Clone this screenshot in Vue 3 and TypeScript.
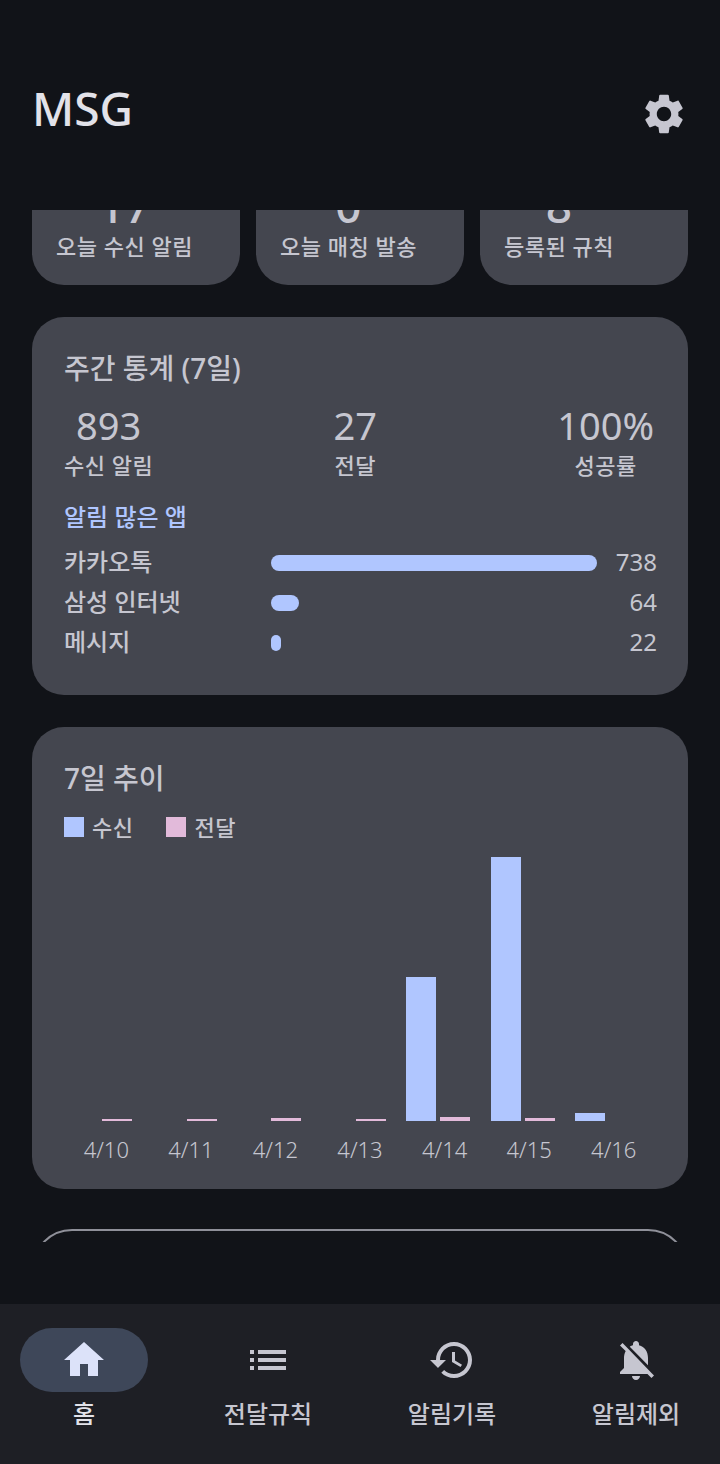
<script setup lang="ts">
import { ref, onMounted } from 'vue'

const scroller = ref<HTMLElement | null>(null)

const todayStats = [
  { value: '17', label: '오늘 수신 알림' },
  { value: '0', label: '오늘 매칭 발송' },
  { value: '8', label: '등록된 규칙' },
]

const weekStats = [
  { value: '893', label: '수신 알림' },
  { value: '27', label: '전달' },
  { value: '100%', label: '성공률' },
]

const topApps = [
  { name: '카카오톡', count: 738, width: 100 },
  { name: '삼성 인터넷', count: 64, width: 8.7 },
  { name: '메시지', count: 22, width: 3 },
]

// heights in px, measured against the tallest bar
const days = [
  { label: '4/10', received: 0, sent: 2 },
  { label: '4/11', received: 0, sent: 2 },
  { label: '4/12', received: 0, sent: 3 },
  { label: '4/13', received: 0, sent: 2 },
  { label: '4/14', received: 144, sent: 4 },
  { label: '4/15', received: 264, sent: 3 },
  { label: '4/16', received: 8, sent: 0 },
]

const tabs = [
  { label: '홈', icon: 'M10 20v-6h4v6h5v-8h3L12 3 2 12h3v8z', active: true },
  { label: '전달규칙', icon: 'M3 13h2v-2H3v2zm0 4h2v-2H3v2zm0-8h2V7H3v2zm4 4h14v-2H7v2zm0 4h14v-2H7v2zM7 7v2h14V7H7z', active: false },
  { label: '알림기록', icon: 'M13 3c-4.97 0-9 4.03-9 9H1l3.89 3.89.07.14L9 12H6c0-3.87 3.13-7 7-7s7 3.13 7 7-3.13 7-7 7c-1.93 0-3.68-.79-4.94-2.06l-1.42 1.42C8.27 19.99 10.51 21 13 21c4.97 0 9-4.03 9-9s-4.03-9-9-9zm-1 5v5l4.28 2.54.72-1.21-3.5-2.08V8H12z', active: false },
  { label: '알림제외', icon: 'M20 18.69L7.84 6.14 5.27 3.49 4 4.76l2.8 2.8v.01c-.52.99-.8 2.16-.8 3.42v5l-2 2v1h13.73l2 2L21 19.72l-1-1.03zM12 22c1.11 0 2-.89 2-2h-4c0 1.11.89 2 2 2zm6-7.32V11c0-3.08-1.64-5.64-4.5-6.32V4c0-.83-.67-1.5-1.5-1.5s-1.5.67-1.5 1.5v.68c-.15.03-.29.08-.42.12-.1.03-.2.07-.3.11h-.01c-.2.08-.4.17-.59.27-.1.05-.2.1-.3.15L18 14.68z', active: false },
]

// the list is shown scrolled down a little
onMounted(() => {
  if (scroller.value) scroller.value.scrollTop = 60
})
</script>

<template>
  <div class="screen">
    <header class="top-bar">
      <span class="title">MSG</span>
      <svg class="gear" viewBox="0 0 24 24" width="48" height="48">
        <path d="M19.14 12.94c.04-.3.06-.61.06-.94 0-.32-.02-.64-.07-.94l2.03-1.58c.18-.14.23-.41.12-.61l-1.92-3.32c-.12-.22-.37-.29-.59-.22l-2.39.96c-.5-.38-1.03-.7-1.62-.94l-.36-2.54c-.04-.24-.24-.41-.48-.41h-3.84c-.24 0-.43.17-.47.41l-.36 2.54c-.59.24-1.13.57-1.62.94l-2.39-.96c-.22-.08-.47 0-.59.22L2.74 8.87c-.12.21-.08.47.12.61l2.03 1.58c-.05.3-.09.63-.09.94s.02.64.07.94l-2.03 1.58c-.18.14-.23.41-.12.61l1.92 3.32c.12.22.37.29.59.22l2.39-.96c.5.38 1.03.7 1.62.94l.36 2.54c.05.24.24.41.48.41h3.84c.24 0 .44-.17.47-.41l.36-2.54c.59-.24 1.13-.56 1.62-.94l2.39.96c.22.08.47 0 .59-.22l1.92-3.32c.12-.22.07-.47-.12-.61l-2.01-1.58zM12 15.6c-1.98 0-3.6-1.62-3.6-3.6s1.62-3.6 3.6-3.6 3.6 1.62 3.6 3.6-1.62 3.6-3.6 3.6z" />
      </svg>
    </header>

    <main ref="scroller" class="content">
      <div class="today-row">
        <div v-for="s in todayStats" :key="s.label" class="today-card">
          <div class="today-inner">
            <span class="today-value">{{ s.value }}</span>
            <span class="today-label">{{ s.label }}</span>
          </div>
        </div>
      </div>

      <section class="card week-card">
        <h2 class="card-title">주간 통계 (7일)</h2>
        <div class="week-row">
          <div v-for="s in weekStats" :key="s.label" class="week-stat">
            <span class="week-value">{{ s.value }}</span>
            <span class="week-label">{{ s.label }}</span>
          </div>
        </div>
        <h3 class="apps-title">알림 많은 앱</h3>
        <div v-for="app in topApps" :key="app.name" class="app-row">
          <span class="app-name">{{ app.name }}</span>
          <div class="app-track">
            <div class="app-bar" :style="{ width: app.width + '%' }"></div>
          </div>
          <span class="app-count">{{ app.count }}</span>
        </div>
      </section>

      <section class="card chart-card">
        <h2 class="card-title">7일 추이</h2>
        <div class="legend">
          <span class="legend-item"><i class="swatch received"></i>수신</span>
          <span class="legend-item"><i class="swatch sent"></i>전달</span>
        </div>
        <div class="chart">
          <div v-for="d in days" :key="d.label" class="day">
            <div class="bars">
              <div class="bar received" :style="{ height: d.received + 'px' }"></div>
              <div class="bar sent" :style="{ height: d.sent + 'px' }"></div>
            </div>
            <span class="day-label">{{ d.label }}</span>
          </div>
        </div>
      </section>

      <div class="outlined"></div>
    </main>

    <nav class="tabs">
      <div v-for="t in tabs" :key="t.label" class="tab" :class="{ active: t.active }">
        <div class="tab-icon">
          <svg viewBox="0 0 24 24" width="48" height="48"><path :d="t.icon" /></svg>
        </div>
        <span class="tab-label">{{ t.label }}</span>
      </div>
    </nav>
  </div>
</template>

<style>
html, body {
  margin: 0;
  background: #111318;
}
</style>

<style scoped>
.screen {
  width: 720px;
  height: 1464px;
  display: flex;
  flex-direction: column;
  background: #111318;
  color: #c6c6d0;
  font-family: "Noto Sans", "Noto Sans CJK KR", sans-serif;
  overflow: hidden;
}

.top-bar {
  height: 210px;
  flex: none;
  box-sizing: border-box;
  padding: 76px 32px 0 32px;
  display: flex;
  justify-content: space-between;
  align-items: flex-start;
}

.title {
  font-size: 46px;
  line-height: 64px;
  font-weight: 500;
  color: #e2e2e9;
}

.gear {
  margin-top: 14px;
  fill: #c6c6d0;
}

.content {
  height: 1032px;
  flex: none;
  overflow: hidden;
  padding: 0 32px;
  display: flex;
  flex-direction: column;
  gap: 32px;
}

.today-row {
  display: grid;
  grid-template-columns: repeat(3, 1fr);
  gap: 16px;
  flex: none;
}

.today-card {
  height: 135px;
  box-sizing: border-box;
  background: #44464f;
  border-radius: 32px;
  padding: 29px 24px 0;
  display: flex;
  align-items: flex-start;
}

.today-inner {
  display: flex;
  flex-direction: column;
  align-items: center;
}

.today-value {
  font-size: 46px;
  font-weight: 500;
  line-height: 52px;
}

.today-label {
  font-size: 22px;
  font-weight: 500;
  letter-spacing: 0.5px;
  line-height: 30px;
}

.card {
  background: #44464f;
  border-radius: 32px;
  padding: 32px;
  flex: none;
}

.card-title {
  margin: 0;
  font-size: 28px;
  line-height: 38px;
  font-weight: 500;
}

.week-card {
  height: 378px;
  box-sizing: border-box;
}

.week-row {
  display: flex;
  justify-content: space-between;
  margin-top: 14px;
  padding-right: 2px;
}

.week-stat {
  display: flex;
  flex-direction: column;
  align-items: center;
}

.week-value {
  font-size: 38px;
  line-height: 48px;
}

.week-label {
  font-size: 22px;
  font-weight: 500;
  letter-spacing: 0.5px;
  line-height: 32px;
}

.apps-title {
  margin: 18px 0 8px;
  font-size: 24px;
  line-height: 36px;
  font-weight: 500;
  color: #b0c6ff;
}

.app-row {
  height: 40px;
  display: flex;
  align-items: center;
}

.app-name {
  width: 207px;
  flex: none;
  font-size: 24px;
  font-weight: 500;
  padding-bottom: 6px;
  box-sizing: border-box;
}

.app-track {
  width: 326px;
  flex: none;
}

.app-bar {
  height: 16px;
  min-width: 10px;
  border-radius: 8px;
  background: #b0c6ff;
}

.app-count {
  flex: 1;
  text-align: right;
  font-size: 24px;
  margin-right: -1px;
  padding-bottom: 4px;
}

.chart-card {
  height: 462px;
  box-sizing: border-box;
}

.legend {
  display: flex;
  gap: 33px;
  margin-top: 14px;
}

.legend-item {
  display: flex;
  align-items: center;
  gap: 8px;
  font-size: 22px;
  font-weight: 500;
  letter-spacing: 0.5px;
  line-height: 32px;
}

.swatch {
  width: 20px;
  height: 20px;
}

.chart {
  margin-top: 14px;
  display: flex;
}

.day {
  flex: 1;
  display: flex;
  flex-direction: column;
  align-items: center;
}

.bars {
  height: 264px;
  align-self: flex-start;
  margin-left: 4px;
  display: flex;
  align-items: flex-end;
  gap: 4px;
}

.bar {
  width: 30px;
}

.received {
  background: #b0c6ff;
}

.sent {
  background: #e2bada;
}

.day-label {
  margin-top: 13px;
  font-size: 22px;
  line-height: 30px;
  font-weight: 300;
}

.outlined {
  height: 96px;
  flex: none;
  margin-top: 8px;
  box-sizing: border-box;
  border: 2px solid #8f9099;
  border-radius: 40px;
}

.tabs {
  margin-top: 62px;
  flex: 1;
  background: #1e1f25;
  display: flex;
  justify-content: space-between;
  padding: 24px 20px 0;
}

.tab {
  width: 128px;
  display: flex;
  flex-direction: column;
  align-items: center;
}

.tab-icon {
  width: 128px;
  height: 64px;
  border-radius: 32px;
  display: flex;
  align-items: center;
  justify-content: center;
  fill: #c6c6d0;
}

.tab.active .tab-icon {
  background: #3e4759;
  fill: #dce2f9;
}

.tab-label {
  margin-top: 4px;
  font-size: 24px;
  line-height: 36px;
  font-weight: 500;
  white-space: nowrap;
}

.tab.active .tab-label {
  color: #e2e2e9;
}
</style>
